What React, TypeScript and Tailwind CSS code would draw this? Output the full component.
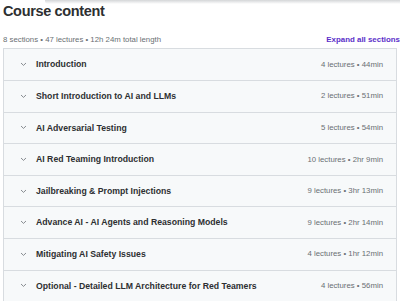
import React from "react";

const sections = [
  { title: "Introduction", meta: "4 lectures • 44min" },
  { title: "Short Introduction to AI and LLMs", meta: "2 lectures • 51min" },
  { title: "AI Adversarial Testing", meta: "5 lectures • 54min" },
  { title: "AI Red Teaming Introduction", meta: "10 lectures • 2hr 9min" },
  { title: "Jailbreaking & Prompt Injections", meta: "9 lectures • 3hr 13min" },
  { title: "Advance AI - AI Agents and Reasoning Models", meta: "9 lectures • 2hr 14min" },
  { title: "Mitigating AI Safety Issues", meta: "4 lectures • 1hr 12min" },
  { title: "Optional - Detailed LLM Architecture for Red Teamers", meta: "4 lectures • 56min" },
];

function Chevron() {
  return (
    <svg width="7" height="5" viewBox="0 0 7 5" fill="none" className="shrink-0">
      <path d="M1.3 1.3 L3.5 3.4 L5.7 1.3" stroke="#7a7f83" strokeWidth="0.9" strokeLinecap="round" strokeLinejoin="round" />
    </svg>
  );
}

export default function App() {
  return (
    <div
      className="relative w-[400px] h-[301px] overflow-hidden bg-white text-[#2d2f31]"
      style={{ fontFamily: '"Liberation Sans", Arial, sans-serif' }}
    >
      <div className="absolute left-[45px] right-0 top-0 h-[4px] rounded-bl-[3px] bg-gradient-to-b from-[#d4d6d8] to-transparent" />
      <div className="pl-[3px]">
        <h2 className="pt-[4px] text-[14.5px] leading-none font-bold tracking-[-0.35px]">Course content</h2>
        <div className="mt-[17px] flex items-end justify-between">
          <div className="text-[7.8px] leading-none text-[#6a6f73]">8 sections • 47 lectures • 12h 24m total length</div>
          <div className="text-[7.9px] leading-none font-bold text-[#5b2fc9]">Expand all sections</div>
        </div>
      </div>
      <div className="mt-[5px] ml-[3px] mr-[3px] border-x border-b border-[#d8dce0]">
        {sections.map((s, i) => (
          <div
            key={i}
            className="flex h-[31.6px] items-center border-t border-[#d8dce0] bg-[#f7f9fa] pl-[16px] pr-[13px]"
          >
            <Chevron />
            <div className="ml-[9px] flex-1 text-[8.7px] font-bold leading-none whitespace-nowrap">{s.title}</div>
            <div className="text-[7.8px] leading-none text-[#6a6f73] whitespace-nowrap">{s.meta}</div>
          </div>
        ))}
      </div>
    </div>
  );
}
